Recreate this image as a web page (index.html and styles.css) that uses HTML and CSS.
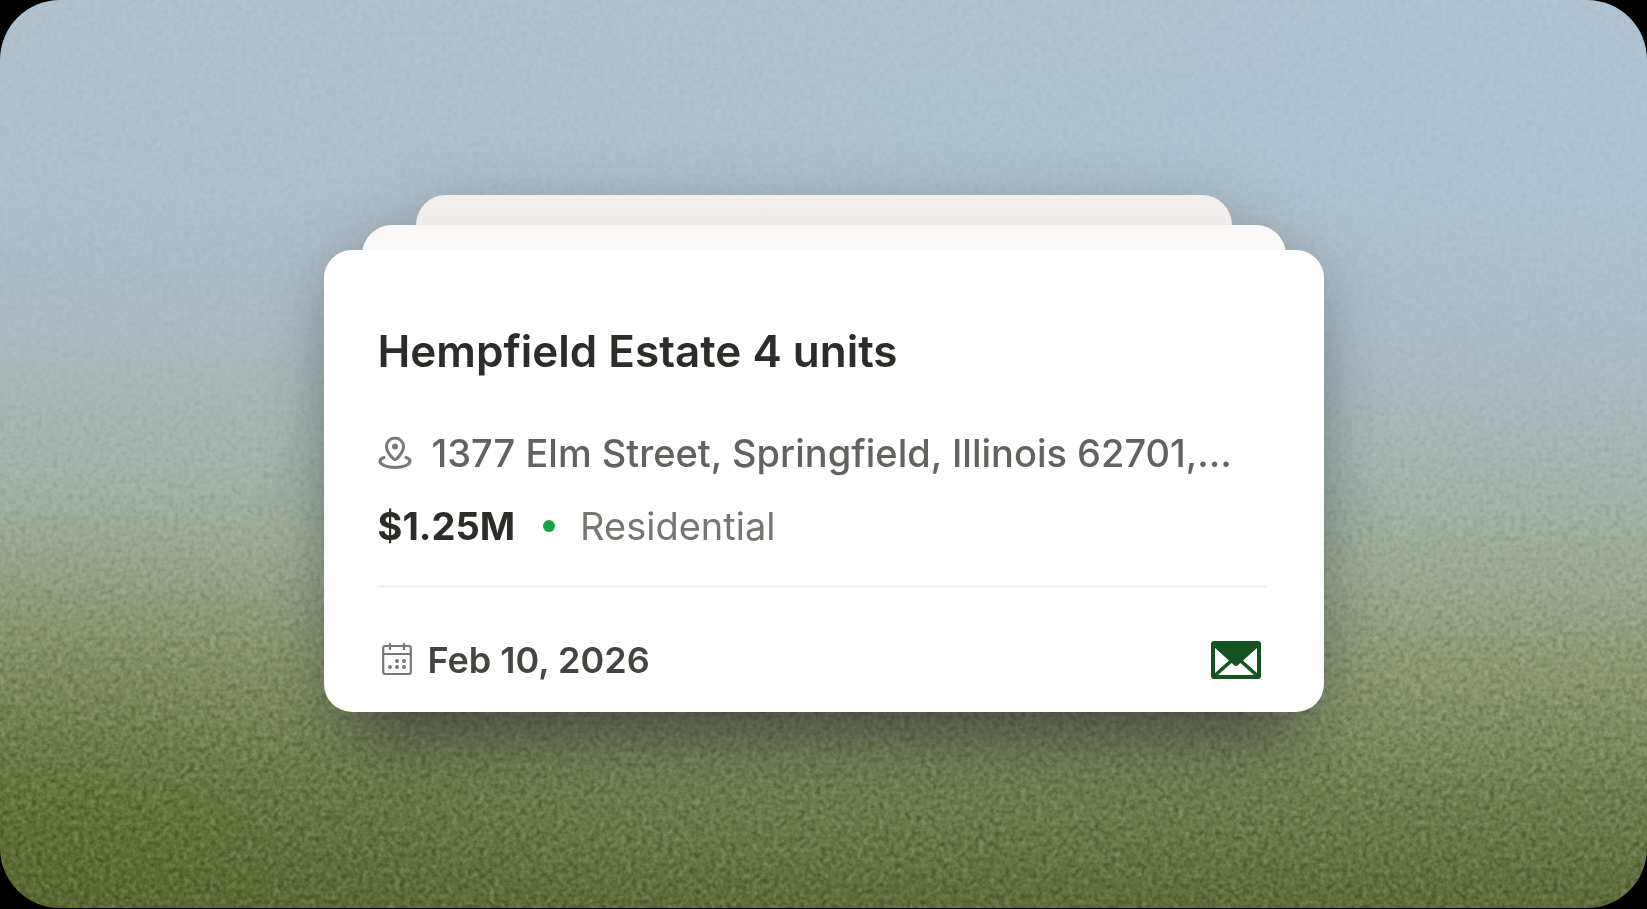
FILE: index.html
```
<!DOCTYPE html>
<html lang="en">
<head>
    <meta charset="UTF-8">
    <meta name="viewport" content="width=device-width, initial-scale=1">
    <title>Hempfield Estate</title>
    <link rel="stylesheet" href="styles.css">
</head>
<body>
    <main class="scene">
        <!-- Film grain over the sky and grass -->
        <svg class="grain" aria-hidden="true">
            <filter id="grain" x="0" y="0" width="100%" height="100%" color-interpolation-filters="sRGB">
                <feTurbulence type="fractalNoise" baseFrequency="0.19" numOctaves="2" seed="4"/>
                <feColorMatrix type="matrix" values="1.2 0.8 0 0 -0.5  1.2 0.8 0 0 -0.5  1.2 0.8 0 0 -0.5  0 0 0 0 1"/>
            </filter>
            <rect width="100%" height="100%" filter="url(#grain)"/>
        </svg>

        <div class="stack">
            <div class="sheet sheet-back"></div>
            <div class="sheet sheet-middle"></div>

            <article class="card">
                <h1 class="title">Hempfield Estate 4 units</h1>

                <p class="address">
                    <svg class="icon-pin" viewBox="0 0 34 34" fill="none" stroke="currentColor" stroke-width="3" stroke-linecap="round" aria-hidden="true">
                        <path d="M17 23.5C16 23.5 8.500 17 8.500 10.500a8.500 8.500 0 0 1 17 0C25.500 17 18 23.500 17 23.500Z" stroke-linejoin="round"/>
                        <circle cx="17" cy="10.500" r="3" fill="currentColor" stroke="none"/>
                        <path d="M6 21.500C3.500 22.300 2 23.500 2 25c0 3.800 6.700 6.500 15 6.500S32 28.800 32 25c0-1.500-1.500-2.700-4-3.500"/>
                    </svg>
                    <span>1377 Elm Street, Springfield, Illinois 62701,…</span>
                </p>

                <div class="details">
                    <strong class="price">$1.25M</strong>
                    <span class="dot"></span>
                    <span class="type">Residential</span>
                </div>

                <footer class="card-footer">
                    <div class="date">
                        <svg class="icon-calendar" viewBox="0 0 30 34" fill="none" stroke="currentColor" stroke-width="2.200" aria-hidden="true">
                            <rect x="1.200" y="3" width="27.600" height="28" rx="2"/>
                            <path d="M1 11h28M8 0v7M22 0v7"/>
                            <g fill="currentColor" stroke="none">
                                <circle cx="15" cy="18" r="2"/>
                                <circle cx="22" cy="18" r="2"/>
                                <circle cx="8" cy="24" r="2"/>
                                <circle cx="15" cy="24" r="2"/>
                                <circle cx="22" cy="24" r="2"/>
                            </g>
                        </svg>
                        <time datetime="2026-02-10">Feb 10, 2026</time>
                    </div>
                    <button class="mail" type="button" aria-label="Send mail">
                        <svg class="icon-mail" viewBox="0 0 50 38" aria-hidden="true">
                            <rect width="50" height="38" rx="3" fill="#14521f"/>
                            <path d="M4 7L18 19.500L4 32ZM46 7L32 19.500L46 32ZM7 34L20.500 22L22 23Q23 25 25 25Q27 25 28 23L29.500 22L43 34Z" fill="#fff"/>
                        </svg>
                    </button>
                </footer>
            </article>
        </div>
    </main>
</body>
</html>
```
FILE: styles.css
```
* {
    box-sizing: border-box;
}
body {
    margin: 0;
    background-color: #000;
    font-family: Inter, "Liberation Sans", sans-serif;
}
h1,
p {
    margin: 0;
}

/* Background */
.scene {
    position: relative;
    display: flex;
    align-items: center;
    justify-content: center;
    min-height: calc(100vh - 1px);
    padding-bottom: 2px;
    overflow: hidden;
    border-radius: 60px;
    background:
        radial-gradient(ellipse at 0% 92%, rgba(78, 94, 28, 0.4), transparent 28%),
        radial-gradient(ellipse at 100% 10%, rgba(175, 197, 218, 0.4), transparent 50%),
        linear-gradient(#afc0cc 0%, #adbfcb 22%, #abbabf 36%, #a5b2ac 50%, #9aa58c 64%, #87936a 76%, #707f4e 87%, #5d6c3a 100%);
}
.grain {
    position: absolute;
    inset: 0;
    width: 100%;
    height: 100%;
    opacity: 0.4;
    mix-blend-mode: soft-light;
    -webkit-mask-image: linear-gradient(rgba(0, 0, 0, 0.25) 40%, #000 80%);
    mask-image: linear-gradient(rgba(0, 0, 0, 0.25) 40%, #000 80%);
}

/* Stacked sheets */
.stack {
    position: relative;
    width: 90%;
    max-width: 1000px;
    filter: drop-shadow(0 14px 30px rgba(50, 60, 65, 0.35));
}
.sheet {
    height: 60px;
    border-radius: 30px 30px 0 0;
}
.sheet-back {
    margin: 0 92px -30px;
    background: linear-gradient(#f4f0ee, #ece8e5 60%);
}
.sheet-middle {
    margin: 0 38px -35px;
    background-color: #f9f8f7;
}

/* Card */
.card {
    padding: 73px 57px 30px 54px;
    border-radius: 28px;
    background-color: #fff;
    box-shadow: 0 60px 60px -40px rgba(40, 35, 40, 0.5);
}
.title {
    color: #2d2c28;
    font-size: 44px;
    font-weight: 600;
    line-height: 56px;
}
.address {
    display: flex;
    align-items: center;
    gap: 20px;
    margin-top: 50px;
    color: #63625e;
    font-size: 38px;
    font-weight: 500;
    line-height: 48px;
    white-space: nowrap;
}
.icon-pin {
    flex: none;
    width: 34px;
    height: 34px;
    color: #7b7873;
}
.details {
    display: flex;
    align-items: center;
    margin-top: 25px;
    padding-bottom: 35px;
    border-bottom: 3px solid #f6f2f0;
    font-size: 38px;
    line-height: 48px;
}
.price {
    color: #2d2c28;
    font-weight: 700;
}
.dot {
    width: 12px;
    height: 12px;
    margin: 0 25px 0 28px;
    border-radius: 50%;
    background-color: #18a34a;
}
.type {
    color: #78746f;
    font-weight: 400;
}
.card-footer {
    display: flex;
    align-items: center;
    justify-content: space-between;
    margin-top: 50px;
    padding: 0 6px 0 4px;
}
.date {
    display: flex;
    align-items: center;
    gap: 16px;
    color: #454540;
    font-size: 36px;
    font-weight: 600;
    line-height: 44px;
}
.icon-calendar {
    width: 30px;
    height: 34px;
    color: #7b7873;
}
.mail {
    display: flex;
    padding: 0;
    border: 0;
    background: none;
    cursor: pointer;
}
.icon-mail {
    width: 50px;
    height: 38px;
}
```
